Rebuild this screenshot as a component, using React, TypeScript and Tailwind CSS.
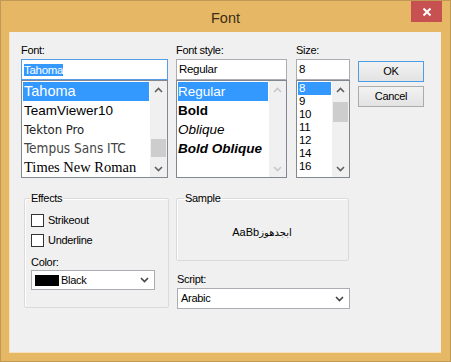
import React from "react";

const UI = "font-['Liberation_Sans',Arial,sans-serif] text-[11px] tracking-[-0.3px] text-black";

const FONTS = [
  { name: "Tahoma", cls: "font-['Liberation_Sans',Arial,sans-serif] text-[14.5px]", sel: true },
  { name: "TeamViewer10", cls: "font-['Liberation_Sans',Arial,sans-serif] text-[13.5px]" },
  { name: "Tekton Pro", cls: "font-['Liberation_Sans_Narrow','DejaVu_Sans_Condensed',sans-serif] text-[13px] text-[#222]" },
  { name: "Tempus Sans ITC", cls: "font-['Liberation_Sans_Narrow','DejaVu_Sans_Condensed',sans-serif] text-[13.5px] text-[#444]" },
  { name: "Times New Roman", cls: "font-['Liberation_Serif','Times_New_Roman',serif] text-[14.5px]" },
];

const STYLES = [
  { name: "Regular", cls: "", sel: true },
  { name: "Bold", cls: "font-bold" },
  { name: "Oblique", cls: "italic" },
  { name: "Bold Oblique", cls: "font-bold italic" },
];

const SIZES = ["8", "9", "10", "11", "12", "14", "16"];

function Chevron({ up, color }: { up?: boolean; color: string }) {
  return (
    <svg width="9" height="6" viewBox="0 0 9 6" fill="none">
      <path d={up ? "M1 5L4.5 1.5L8 5" : "M1 1L4.5 4.5L8 1"} stroke={color} strokeWidth="1.6" />
    </svg>
  );
}

function ScrollBar({ thumb, disabled }: { thumb?: string; disabled?: boolean }) {
  const c = disabled ? "#c8c8c8" : "#606060";
  return (
    <div className="flex w-[17px] shrink-0 flex-col bg-[#f0f0f0]">
      <div className="flex h-[17px] items-center justify-center">
        <Chevron up color={c} />
      </div>
      <div className="flex-1 px-[1px]">{thumb && <div className={`bg-[#cdcdcd] ${thumb}`} />}</div>
      <div className="flex h-[17px] items-center justify-center">
        <Chevron color={c} />
      </div>
    </div>
  );
}

function Combo({ children, className }: { children: React.ReactNode; className: string }) {
  return (
    <div className={`flex items-center border border-[#abadb3] bg-white pr-[5px] ${className}`}>
      <div className="flex flex-1 items-center">{children}</div>
      <Chevron color="#444" />
    </div>
  );
}

function Button({ label, primary }: { label: string; primary?: boolean }) {
  return (
    <div
      className={`flex h-[21px] items-center justify-center border bg-gradient-to-b from-[#f2f2f2] to-[#e3e3e3] ${
        primary ? "border-[#4d9de6]" : "border-[#acacac]"
      }`}
    >
      {label}
    </div>
  );
}

export default function App() {
  return (
    <div className={`flex h-[362px] w-[451px] flex-col border border-[#c09a55] bg-[#e6b866] ${UI}`}>
      <div className="grid h-[31px] shrink-0 grid-cols-[1fr_auto_1fr]">
        <div />
        <div className="pt-[7px] font-['Liberation_Sans',Arial,sans-serif] text-[14.5px] tracking-normal text-[#3b2e14]">Font</div>
        <div className="flex justify-end pr-[8px]">
          <div className="flex h-[21px] w-[31px] items-center justify-center bg-[#c75050]">
            <svg width="10" height="10" viewBox="0 0 10 10">
              <path d="M1.5 1.5L8.5 8.5M8.5 1.5L1.5 8.5" stroke="#fff" strokeWidth="2" />
            </svg>
          </div>
        </div>
      </div>

      <div className="ml-[8px] mr-[9px] flex h-[321px] flex-col border-l border-b border-[#f6e2b8] bg-[#f0f0f0] pl-[11px] pt-[12px]">
        <div className="flex">
          <div className="flex w-[147px] flex-col">
            <div className="h-[13px] leading-[13px]">Font:</div>
            <div className="mt-[2px] flex h-[21px] items-center border border-[#569de5] bg-white pl-[2px]">
              <span className="bg-[#3399ff] text-[11.5px] leading-[12px] text-white">Tahoma</span>
            </div>
            <div className="flex h-[98px] overflow-hidden border border-[#828790] bg-white">
              <div className="flex-1 overflow-hidden p-[1px]">
                {FONTS.map((f) => (
                  <div
                    key={f.name}
                    className={`h-[19px] whitespace-nowrap pl-[1px] leading-[19px] tracking-normal ${f.cls} ${
                      f.sel ? "bg-[#3399ff] text-white" : ""
                    }`}
                  >
                    {f.name}
                  </div>
                ))}
              </div>
              <ScrollBar thumb="mt-[41px] h-[18px]" />
            </div>
          </div>

          <div className="ml-[8px] flex w-[111px] flex-col">
            <div className="h-[13px] leading-[13px]">Font style:</div>
            <div className="mt-[2px] flex h-[21px] items-center border border-[#abadb3] bg-white pl-[2px] text-[11.5px]">Regular</div>
            <div className="flex h-[98px] overflow-hidden border border-[#828790] bg-white">
              <div className="flex-1 overflow-hidden p-[1px]">
                {STYLES.map((s) => (
                  <div
                    key={s.name}
                    className={`h-[19px] whitespace-nowrap font-['Liberation_Sans',Arial,sans-serif] text-[13.5px] leading-[19px] tracking-normal ${s.cls} ${
                      s.sel ? "bg-[#3399ff] text-white" : ""
                    }`}
                  >
                    {s.name}
                  </div>
                ))}
              </div>
              <ScrollBar disabled />
            </div>
          </div>

          <div className="ml-[9px] flex w-[54px] flex-col">
            <div className="h-[13px] leading-[13px]">Size:</div>
            <div className="mt-[2px] flex h-[21px] items-center border border-[#abadb3] bg-white pl-[2px] text-[11.5px]">8</div>
            <div className="flex h-[98px] overflow-hidden border border-[#828790] bg-white">
              <div className="flex-1 overflow-hidden p-[1px]">
                {SIZES.map((s, i) => (
                  <div
                    key={s}
                    className={`h-[13px] pl-[1px] text-[11.5px] leading-[13px] ${i === 0 ? "bg-[#3399ff] text-white" : ""}`}
                  >
                    {s}
                  </div>
                ))}
              </div>
              <ScrollBar thumb="mt-[4px] h-[20px]" />
            </div>
          </div>

          <div className="ml-[8px] flex w-[66px] flex-col gap-[4px] pt-[17px]">
            <Button label="OK" primary />
            <Button label="Cancel" />
          </div>
        </div>

        <div className="ml-[3px] mt-[13px] flex">
          <fieldset className="h-[117px] w-[145px] rounded-[2px] border border-[#dadada] pl-[6px] pt-[8px] shadow-[inset_1px_1px_0_#fff]">
            <legend className="-ml-[1px] px-[1px] leading-[14px]">Effects</legend>
            <div className="flex h-[14px] items-center gap-[4px]">
              <div className="h-[13px] w-[13px] border border-[#333] bg-white" />
              <span>Strikeout</span>
            </div>
            <div className="mt-[6px] flex h-[14px] items-center gap-[4px]">
              <div className="h-[13px] w-[13px] border border-[#333] bg-white" />
              <span>Underline</span>
            </div>
            <div className="mt-[9px] h-[13px] leading-[13px]">Color:</div>
            <Combo className="mt-[1px] h-[20px] w-[124px]">
              <div className="ml-[3px] h-[11px] w-[24px] bg-black" />
              <span className="ml-[2px]">Black</span>
            </Combo>
          </fieldset>

          <div className="ml-[7px] flex w-[173px] flex-col">
            <fieldset className="h-[70px] rounded-[2px] border border-[#dadada] pl-[7px] shadow-[inset_1px_1px_0_#fff]">
              <legend className="px-[1px] leading-[14px]">Sample</legend>
              <div className="flex h-[54px] items-center justify-center pr-[8px] tracking-normal">
                <span className="font-['Liberation_Sans','DejaVu_Sans',sans-serif] text-[11px]">
                  AaBb<span className="font-['DejaVu_Sans',sans-serif] text-[10px]">ابجدهوز</span>
                </span>
              </div>
            </fieldset>
            <div className="ml-[1px] mt-[12px] h-[13px] leading-[13px]">Script:</div>
            <Combo className="ml-[1px] mt-[2px] h-[21px] w-[173px]">
              <span className="pl-[3px]">Arabic</span>
            </Combo>
          </div>
        </div>
      </div>
    </div>
  );
}
